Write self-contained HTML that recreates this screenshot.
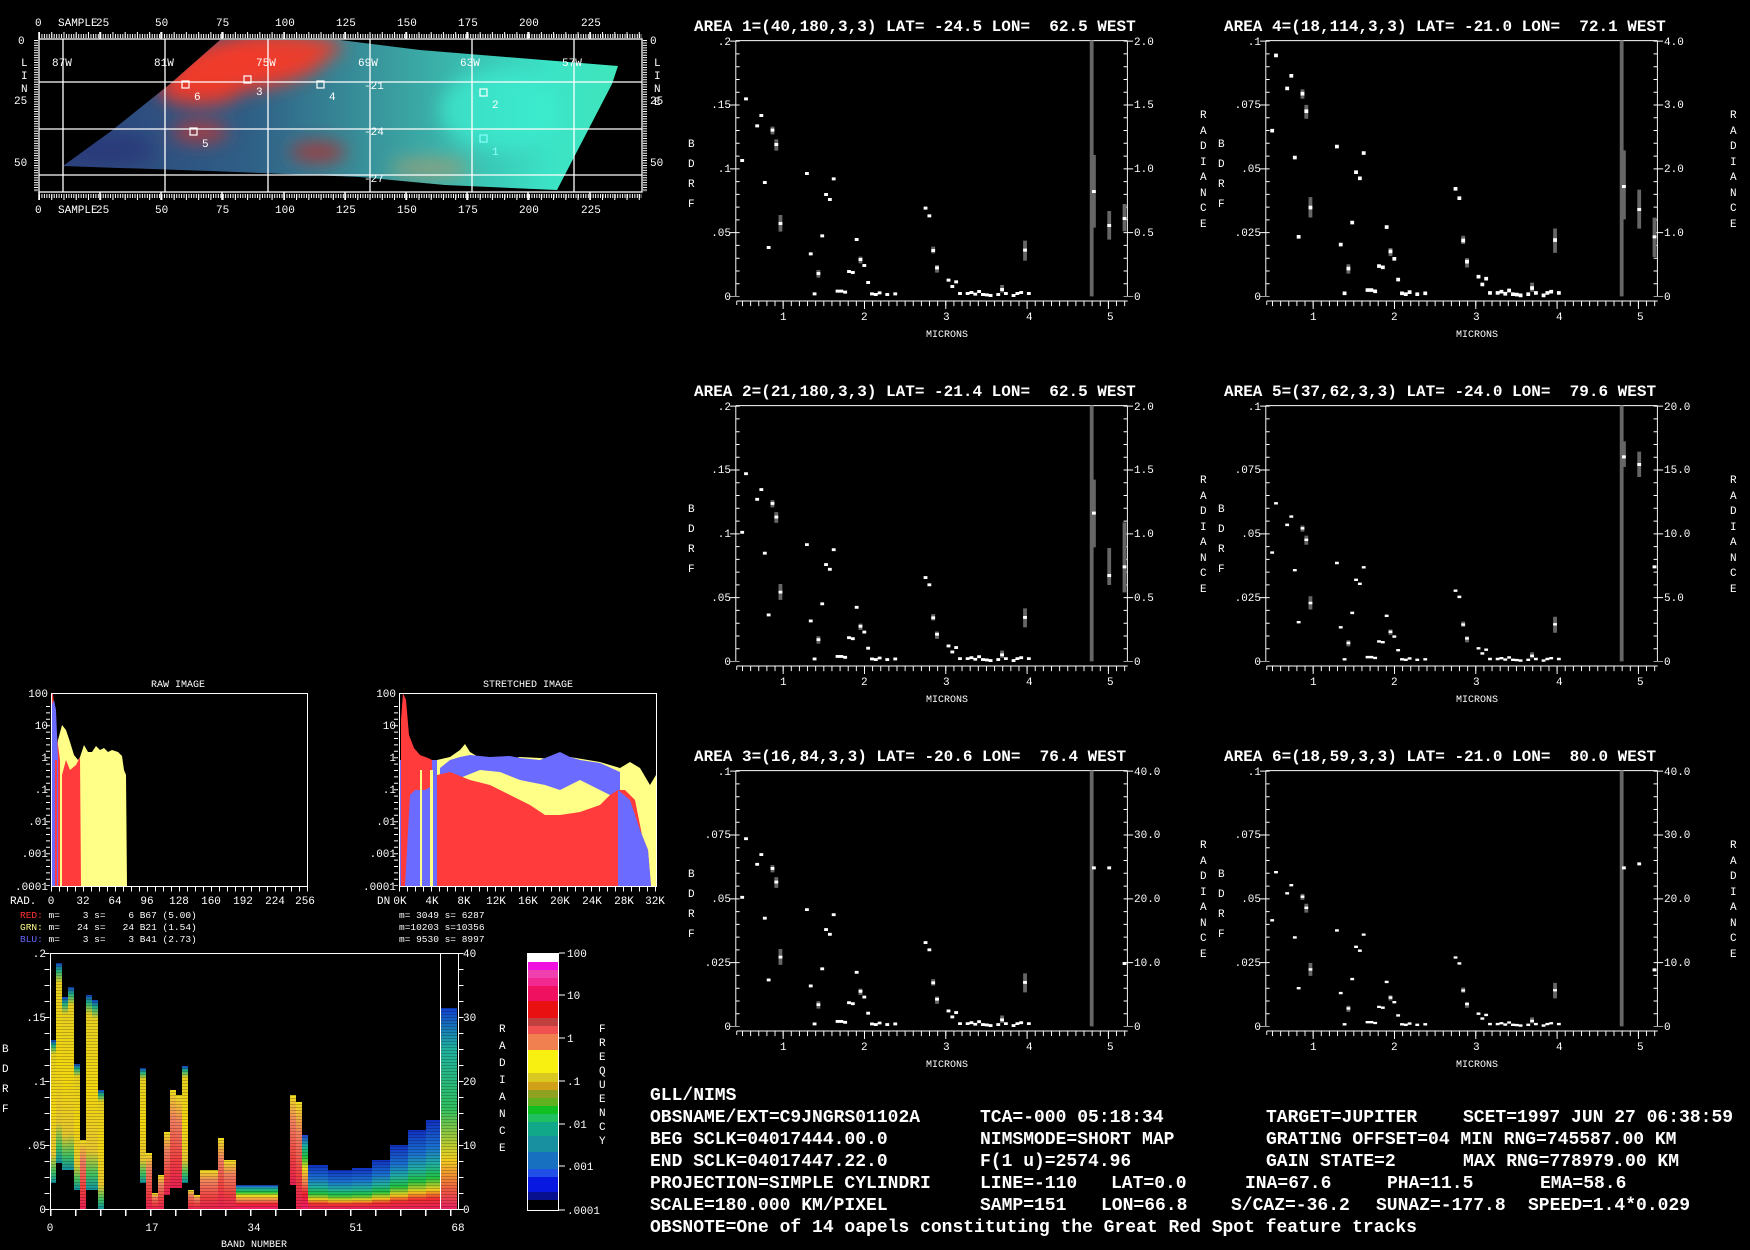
<!DOCTYPE html>
<html><head><meta charset="utf-8"><style>
html,body{margin:0;padding:0;background:#000;}
svg{display:block;}
text{font-family:"Liberation Mono",monospace;fill:#fff;white-space:pre;}
.s{font-size:11px;}
.t{font-size:16px;font-weight:bold;}
.b{font-size:18px;font-weight:bold;fill:#f2f2f2;}
</style></head><body>
<svg width="1750" height="1250" viewBox="0 0 1750 1250" xmlns="http://www.w3.org/2000/svg">
<rect width="1750" height="1250" fill="#000"/>
<defs>
 <filter id="bl" x="-20%" y="-20%" width="140%" height="140%"><feGaussianBlur stdDeviation="9"/></filter>
 <clipPath id="mapclip"><polygon points="220,40 340,40 420,50 618,66 612,84 557,190 445,185 360,177 210,171 63,166 110,132 170,84"/></clipPath>
 <linearGradient id="mg" x1="0" y1="0" x2="1" y2="0">
  <stop offset="0" stop-color="#2c3f7a"/><stop offset="0.35" stop-color="#2f5f86"/><stop offset="0.6" stop-color="#3aa0a0"/><stop offset="0.85" stop-color="#3be3c6"/><stop offset="1" stop-color="#42e6b8"/>
 </linearGradient>
 <pattern id="stripe" width="6" height="3" patternUnits="userSpaceOnUse"><rect width="6" height="1" fill="#000" opacity="0.22"/></pattern>
 <g id="ax" fill="none" stroke="#fff">
  <path d="M175 122H1403M175 122V889M1403 122V889M178 903H1404" stroke-width="3"/>
  <path d="M181 122V890" stroke-width="12" stroke-dasharray="3 35.3"/>
  <path d="M166 122V890" stroke-width="18" stroke-dasharray="3 188.5"/>
  <path d="M1397 122V890" stroke-width="12" stroke-dasharray="3 35.3"/>
  <path d="M1412 122V890" stroke-width="18" stroke-dasharray="3 188.5"/>
  <path d="M194.5 911H1404" stroke-width="15" stroke-dasharray="3 22.5"/>
  <path d="M322 915H1404" stroke-width="24" stroke-dasharray="3 252"/>
  <path d="M178 915V903" stroke-width="3"/>
 </g>
 <path id="pts" fill="#fff" d="M189 477h12v9h-12zM201 292h12v9h-12zM236 373h12v9h-12zM249 342h12v9h-12zM260 543h12v9h-12zM272 738h12v9h-12zM284 386h12v9h-12zM296 429h12v9h-12zM309 666h12v9h-12zM392 516h12v9h-12zM404 757h12v9h-12zM416 877h12v9h-12zM428 816h12v9h-12zM440 703h12v9h-12zM452 579h12v9h-12zM464 594h12v9h-12zM476 532h12v9h-12zM488 869h12v9h-12zM500 869h12v9h-12zM512 872h12v9h-12zM524 810h12v9h-12zM536 813h12v9h-12zM548 714h12v9h-12zM560 774h12v9h-12zM572 792h12v9h-12zM584 843h12v9h-12zM596 877h12v9h-12zM608 879h12v9h-12zM620 874h12v9h-12zM644 879h12v9h-12zM669 877h12v9h-12zM764 620h12v9h-12zM776 643h12v9h-12zM788 747h12v9h-12zM800 799h12v9h-12zM836 836h12v9h-12zM848 855h12v9h-12zM860 841h12v9h-12zM872 876h12v9h-12zM896 876h12v9h-12zM908 873h12v9h-12zM920 878h12v9h-12zM932 870h12v9h-12zM944 879h12v9h-12zM956 880h12v9h-12zM968 882h12v9h-12zM992 879h12v9h-12zM1004 864h12v9h-12zM1016 876h12v9h-12zM1040 882h12v9h-12zM1052 876h12v9h-12zM1064 873h12v9h-12zM1076 746h12v9h-12zM1088 876h12v9h-12z"/>
 <path id="err" fill="#666" d="M284 380h12v23h-12zM296 418h12v34h-12zM309 645h12v50h-12zM428 810h12v23h-12zM560 770h12v20h-12zM788 740h12v20h-12zM800 795h12v23h-12zM1076 722h12v60h-12zM1004 855h12v23h-12z"/>
 <path id="full" fill="#666" d="M1285 122h12v767h-12z"/>
</defs>

<!-- MAP -->
<g>
 <g clip-path="url(#mapclip)">
  <rect x="40" y="30" width="600" height="170" fill="url(#mg)"/>
  <g filter="url(#bl)">
   <ellipse cx="250" cy="62" rx="80" ry="28" fill="#f03a2a" transform="rotate(-8 250 62)"/>
   <ellipse cx="200" cy="88" rx="42" ry="17" fill="#ec3a2c"/>
   <ellipse cx="300" cy="48" rx="42" ry="12" fill="#e8402f"/>
   <ellipse cx="200" cy="132" rx="28" ry="10" fill="#b03a3c"/>
   <ellipse cx="318" cy="152" rx="28" ry="10" fill="#a03a3c"/>
   <ellipse cx="110" cy="150" rx="45" ry="16" fill="#2b3a7a"/>
   <ellipse cx="430" cy="168" rx="40" ry="10" fill="#8aa080"/>
   <ellipse cx="500" cy="110" rx="60" ry="40" fill="#3af0d0" opacity="0.7"/>
  </g>
 </g>
 <g stroke="#fff" stroke-width="1.3" fill="none">
  <rect x="39" y="39" width="603" height="153"/>
  <path d="M63 39V192M165 39V192M268 39V192M370 39V192M472 39V192M574 39V192M39 82H642M39 129H642M39 175H642"/>
 </g>
 <g stroke="#fff" fill="none">
  <path d="M39 36H642" stroke-width="4" stroke-dasharray="1 1.45"/>
  <path d="M39 35H642" stroke-width="6" stroke-dasharray="1 11.24"/>
  <path d="M39 196H642" stroke-width="4" stroke-dasharray="1 1.45"/>
  <path d="M39 197H642" stroke-width="6" stroke-dasharray="1 11.24"/>
  <path d="M39 32V39M100 32V39M161 32V39M222 32V39M284 32V39M345 32V39M406 32V39M467 32V39M528 32V39M590 32V39M39 192V200M100 192V200M161 192V200M222 192V200M284 192V200M345 192V200M406 192V200M467 192V200M528 192V200M590 192V200" stroke-width="1.5"/>
  <path d="M36 40V192" stroke-width="4" stroke-dasharray="1 1.45"/>
  <path d="M645 40V192" stroke-width="4" stroke-dasharray="1 1.45"/>
 </g>
 <g class="s">
  <text x="35" y="26">0</text><text x="58" y="26">SAMPLE</text><text x="96" y="26">25</text><text x="155" y="26">50</text><text x="216" y="26">75</text><text x="275" y="26">100</text><text x="336" y="26">125</text><text x="397" y="26">150</text><text x="458" y="26">175</text><text x="519" y="26">200</text><text x="581" y="26">225</text>
  <text x="35" y="213">0</text><text x="58" y="213">SAMPLE</text><text x="96" y="213">25</text><text x="155" y="213">50</text><text x="216" y="213">75</text><text x="275" y="213">100</text><text x="336" y="213">125</text><text x="397" y="213">150</text><text x="458" y="213">175</text><text x="519" y="213">200</text><text x="581" y="213">225</text>
  <text x="18" y="44">0</text><text x="21" y="66">L</text><text x="21" y="79">I</text><text x="21" y="92">N</text><text x="14" y="104">25</text><text x="14" y="166">50</text>
  <text x="650" y="44">0</text><text x="654" y="66">L</text><text x="654" y="79">I</text><text x="654" y="92">N</text><text x="654" y="105">E</text><text x="650" y="104">25</text><text x="650" y="166">50</text>
  <text x="52" y="66">87W</text><text x="154" y="66">81W</text><text x="256" y="66">75W</text><text x="358" y="66">69W</text><text x="460" y="66">63W</text><text x="562" y="66">57W</text>
  <text x="364" y="89">-21</text><text x="364" y="135">-24</text><text x="364" y="182">-27</text>
 </g>
 <g fill="none" stroke="#fff" stroke-width="1.2">
  <rect x="182" y="81" width="7" height="7"/><rect x="244" y="76" width="7" height="7"/><rect x="317" y="81" width="7" height="7"/><rect x="480" y="89" width="7" height="7"/><rect x="190" y="128" width="7" height="7"/><rect x="480" y="135" width="7" height="7" stroke="#8ff"/>
 </g>
 <g class="s">
  <text x="194" y="100">6</text><text x="256" y="95">3</text><text x="329" y="100">4</text><text x="492" y="108">2</text><text x="202" y="147">5</text><text x="492" y="155" style="fill:#8ff">1</text>
 </g>
</g>

<!-- SPECTRA -->
<g>
 <text class="t" x="694" y="31">AREA 1=(40,180,3,3) LAT= -24.5 LON=  62.5 WEST</text>
 <g transform="translate(680,0) scale(0.31888,0.33333)">
  <use href="#ax"/><use href="#full"/><use href="#err"/><use href="#pts"/>
  <path fill="#666" d="M1292 465h12v218h-12zM1340 633h12v86h-12zM1388 612h12v82h-12z"/>
  <path fill="#fff" d="M1292 570h12v9h-12zM1340 672h12v9h-12zM1388 651h12v9h-12z"/>
 </g>
 <g class="s" text-anchor="end"><text x="731" y="45">.2</text><text x="731" y="108">.15</text><text x="731" y="172">.1</text><text x="731" y="236">.05</text><text x="731" y="300">0</text></g>
 <g class="s"><text x="1134" y="45">2.0</text><text x="1134" y="108">1.5</text><text x="1134" y="172">1.0</text><text x="1134" y="236">0.5</text><text x="1134" y="300">0</text></g>
</g>
<g transform="translate(0,365)">
 <text class="t" x="694" y="31">AREA 2=(21,180,3,3) LAT= -21.4 LON=  62.5 WEST</text>
 <g transform="translate(680,0) scale(0.31888,0.33333)">
  <use href="#ax"/><use href="#full"/>
  <g transform="translate(0,888) scale(1,0.95) translate(0,-888)"><use href="#err"/><use href="#pts"/></g>
  <path fill="#666" d="M1292 344h12v203h-12zM1340 549h12v111h-12zM1388 472h12v210h-12z"/>
  <path fill="#fff" d="M1292 440h12v9h-12zM1340 627h12v9h-12zM1388 601h12v9h-12z"/>
 </g>
 <g class="s" text-anchor="end"><text x="731" y="45">.2</text><text x="731" y="108">.15</text><text x="731" y="172">.1</text><text x="731" y="236">.05</text><text x="731" y="300">0</text></g>
 <g class="s"><text x="1134" y="45">2.0</text><text x="1134" y="108">1.5</text><text x="1134" y="172">1.0</text><text x="1134" y="236">0.5</text><text x="1134" y="300">0</text></g>
</g>
<g transform="translate(0,730)">
 <text class="t" x="694" y="31">AREA 3=(16,84,3,3) LAT= -20.6 LON=  76.4 WEST</text>
 <g transform="translate(680,0) scale(0.31888,0.33333)">
  <use href="#ax"/><use href="#full"/>
  <g transform="translate(0,888) scale(1,0.95) translate(0,-888)"><use href="#err"/><use href="#pts"/></g>
  <path fill="#fff" d="M1292 409h12v9h-12zM1340 409h12v9h-12zM1388 696h12v9h-12z"/>
 </g>
 <g class="s" text-anchor="end"><text x="731" y="45">.1</text><text x="731" y="108">.075</text><text x="731" y="172">.05</text><text x="731" y="236">.025</text><text x="731" y="300">0</text></g>
 <g class="s"><text x="1134" y="45">40.0</text><text x="1134" y="108">30.0</text><text x="1134" y="172">20.0</text><text x="1134" y="236">10.0</text><text x="1134" y="300">0</text></g>
</g>
<g transform="translate(530,0)">
 <text class="t" x="694" y="31">AREA 4=(18,114,3,3) LAT= -21.0 LON=  72.1 WEST</text>
 <g transform="translate(680,0) scale(0.31888,0.33333)">
  <use href="#ax"/><use href="#full"/>
  <g transform="translate(0,888) scale(1,1.22) translate(0,-888)"><use href="#err"/><use href="#pts"/></g>
  <path fill="#666" d="M1292 451h12v207h-12zM1340 569h12v117h-12zM1388 653h12v118h-12z"/>
  <path fill="#fff" d="M1292 555h12v9h-12zM1340 624h12v9h-12zM1388 706h12v9h-12z"/>
 </g>
 <g class="s" text-anchor="end"><text x="731" y="45">.1</text><text x="731" y="108">.075</text><text x="731" y="172">.05</text><text x="731" y="236">.025</text><text x="731" y="300">0</text></g>
 <g class="s"><text x="1134" y="45">4.0</text><text x="1134" y="108">3.0</text><text x="1134" y="172">2.0</text><text x="1134" y="236">1.0</text><text x="1134" y="300">0</text></g>
</g>
<g transform="translate(530,365)">
 <text class="t" x="694" y="31">AREA 5=(37,62,3,3) LAT= -24.0 LON=  79.6 WEST</text>
 <g transform="translate(680,0) scale(0.31888,0.33333)">
  <use href="#ax"/><use href="#full"/>
  <g transform="translate(0,888) scale(1,0.8) translate(0,-888)"><use href="#err"/><use href="#pts"/></g>
  <path fill="#666" d="M1292 229h12v77h-12zM1340 260h12v76h-12z"/>
  <path fill="#fff" d="M1292 271h12v9h-12zM1340 294h12v9h-12zM1388 601h12v9h-12z"/>
 </g>
 <g class="s" text-anchor="end"><text x="731" y="45">.1</text><text x="731" y="108">.075</text><text x="731" y="172">.05</text><text x="731" y="236">.025</text><text x="731" y="300">0</text></g>
 <g class="s"><text x="1134" y="45">20.0</text><text x="1134" y="108">15.0</text><text x="1134" y="172">10.0</text><text x="1134" y="236">5.0</text><text x="1134" y="300">0</text></g>
</g>
<g transform="translate(530,730)">
 <text class="t" x="694" y="31">AREA 6=(18,59,3,3) LAT= -21.0 LON=  80.0 WEST</text>
 <g transform="translate(680,0) scale(0.31888,0.33333)">
  <use href="#ax"/><use href="#full"/>
  <g transform="translate(0,888) scale(1,0.78) translate(0,-888)"><use href="#err"/><use href="#pts"/></g>
  <path fill="#fff" d="M1292 409h12v9h-12zM1340 397h12v9h-12zM1388 715h12v9h-12z"/>
 </g>
 <g class="s" text-anchor="end"><text x="731" y="45">.1</text><text x="731" y="108">.075</text><text x="731" y="172">.05</text><text x="731" y="236">.025</text><text x="731" y="300">0</text></g>
 <g class="s"><text x="1134" y="45">40.0</text><text x="1134" y="108">30.0</text><text x="1134" y="172">20.0</text><text x="1134" y="236">10.0</text><text x="1134" y="300">0</text></g>
</g>
<g class="s">
 <g><text x="688" y="147">B</text><text x="688" y="167">D</text><text x="688" y="187">R</text><text x="688" y="207">F</text><text x="1200" y="118">R</text><text x="1200" y="134">A</text><text x="1200" y="149">D</text><text x="1200" y="165">I</text><text x="1200" y="180">A</text><text x="1200" y="196">N</text><text x="1200" y="211">C</text><text x="1200" y="227">E</text><text x="780" y="320">1</text><text x="861" y="320">2</text><text x="943" y="320">3</text><text x="1026" y="320">4</text><text x="1107" y="320">5</text><text x="926" y="337" style="font-size:10px">MICRONS</text></g>
 <g transform="translate(0,365)"><text x="688" y="147">B</text><text x="688" y="167">D</text><text x="688" y="187">R</text><text x="688" y="207">F</text><text x="1200" y="118">R</text><text x="1200" y="134">A</text><text x="1200" y="149">D</text><text x="1200" y="165">I</text><text x="1200" y="180">A</text><text x="1200" y="196">N</text><text x="1200" y="211">C</text><text x="1200" y="227">E</text><text x="780" y="320">1</text><text x="861" y="320">2</text><text x="943" y="320">3</text><text x="1026" y="320">4</text><text x="1107" y="320">5</text><text x="926" y="337" style="font-size:10px">MICRONS</text></g>
 <g transform="translate(0,730)"><text x="688" y="147">B</text><text x="688" y="167">D</text><text x="688" y="187">R</text><text x="688" y="207">F</text><text x="1200" y="118">R</text><text x="1200" y="134">A</text><text x="1200" y="149">D</text><text x="1200" y="165">I</text><text x="1200" y="180">A</text><text x="1200" y="196">N</text><text x="1200" y="211">C</text><text x="1200" y="227">E</text><text x="780" y="320">1</text><text x="861" y="320">2</text><text x="943" y="320">3</text><text x="1026" y="320">4</text><text x="1107" y="320">5</text><text x="926" y="337" style="font-size:10px">MICRONS</text></g>
 <g transform="translate(530,0)"><text x="688" y="147">B</text><text x="688" y="167">D</text><text x="688" y="187">R</text><text x="688" y="207">F</text><text x="1200" y="118">R</text><text x="1200" y="134">A</text><text x="1200" y="149">D</text><text x="1200" y="165">I</text><text x="1200" y="180">A</text><text x="1200" y="196">N</text><text x="1200" y="211">C</text><text x="1200" y="227">E</text><text x="780" y="320">1</text><text x="861" y="320">2</text><text x="943" y="320">3</text><text x="1026" y="320">4</text><text x="1107" y="320">5</text><text x="926" y="337" style="font-size:10px">MICRONS</text></g>
 <g transform="translate(530,365)"><text x="688" y="147">B</text><text x="688" y="167">D</text><text x="688" y="187">R</text><text x="688" y="207">F</text><text x="1200" y="118">R</text><text x="1200" y="134">A</text><text x="1200" y="149">D</text><text x="1200" y="165">I</text><text x="1200" y="180">A</text><text x="1200" y="196">N</text><text x="1200" y="211">C</text><text x="1200" y="227">E</text><text x="780" y="320">1</text><text x="861" y="320">2</text><text x="943" y="320">3</text><text x="1026" y="320">4</text><text x="1107" y="320">5</text><text x="926" y="337" style="font-size:10px">MICRONS</text></g>
 <g transform="translate(530,730)"><text x="688" y="147">B</text><text x="688" y="167">D</text><text x="688" y="187">R</text><text x="688" y="207">F</text><text x="1200" y="118">R</text><text x="1200" y="134">A</text><text x="1200" y="149">D</text><text x="1200" y="165">I</text><text x="1200" y="180">A</text><text x="1200" y="196">N</text><text x="1200" y="211">C</text><text x="1200" y="227">E</text><text x="780" y="320">1</text><text x="861" y="320">2</text><text x="943" y="320">3</text><text x="1026" y="320">4</text><text x="1107" y="320">5</text><text x="926" y="337" style="font-size:10px">MICRONS</text></g>
</g>

<!-- HISTOGRAMS -->
<g class="s">
 <text x="178" y="687" text-anchor="middle" style="font-size:10px">RAW IMAGE</text>
 <text x="528" y="687" text-anchor="middle" style="font-size:10px">STRETCHED IMAGE</text>
 <g text-anchor="end"><text x="48" y="697">100</text><text x="48" y="729">10</text><text x="48" y="761">1</text><text x="48" y="793">.1</text><text x="48" y="825">.01</text><text x="48" y="857">.001</text><text x="48" y="890">.0001</text>
 <text x="396" y="697">100</text><text x="396" y="729">10</text><text x="396" y="761">1</text><text x="396" y="793">.1</text><text x="396" y="825">.01</text><text x="396" y="857">.001</text><text x="396" y="890">.0001</text></g>
 <text x="10" y="904">RAD.</text>
 <g text-anchor="middle"><text x="51" y="904">0</text><text x="83" y="904">32</text><text x="115" y="904">64</text><text x="147" y="904">96</text><text x="179" y="904">128</text><text x="211" y="904">160</text><text x="243" y="904">192</text><text x="275" y="904">224</text><text x="305" y="904">256</text>
 <text x="400" y="904">0K</text><text x="432" y="904">4K</text><text x="464" y="904">8K</text><text x="496" y="904">12K</text><text x="528" y="904">16K</text><text x="560" y="904">20K</text><text x="592" y="904">24K</text><text x="624" y="904">28K</text><text x="655" y="904">32K</text></g>
 <text x="377" y="904">DN</text>
 <g style="font-size:9.5px">
  <text x="20" y="918"><tspan style="fill:#f33">RED:</tspan> m=    3 s=    6 B67 (5.00)</text>
  <text x="20" y="930"><tspan style="fill:#ff8">GRN:</tspan> m=   24 s=   24 B21 (1.54)</text>
  <text x="20" y="942"><tspan style="fill:#66f">BLU:</tspan> m=    3 s=    3 B41 (2.73)</text>
  <text x="399" y="918">m= 3049 s= 6287</text>
  <text x="399" y="930">m=10203 s=10356</text>
  <text x="399" y="942">m= 9530 s= 8997</text>
 </g>
</g>
<g>
 <polygon fill="#ffff88" points="51,886 51,770 55,770 58,740 62,725 66,730 70,742 74,755 78,760 80,757 84,745 88,752 92,752 96,746 100,750 104,748 108,752 112,750 118,752 122,756 124,770 126,775 127,886"/>
 <polygon fill="#ff3b3b" points="51,886 51,693 53,693 55,720 58,745 60,760 60,886"/>
 <polygon fill="#ff3b3b" points="62,886 62,775 66,760 70,770 76,765 80,757 81,886"/>
 <polygon fill="#6b6bff" points="51,886 51,750 52,705 54,700 56,710 57,735 58,760 58,886"/>
 <rect x="55" y="760" width="2" height="126" fill="#ff3b3b"/>
</g>
<g>
 <rect x="399" y="760" width="38" height="126" fill="#6b6bff"/>
 <polygon fill="#ffff88" points="437,886 437,760 450,757 460,750 465,744 470,752 480,758 500,760 520,757 540,758 560,760 570,757 600,762 610,765 620,768 630,762 640,768 650,785 656,775 656,886"/>
 <polygon fill="#6b6bff" points="440,768 450,760 460,757 470,755 490,757 510,756 520,758 540,760 560,752 570,757 580,760 600,763 620,772 620,800 600,790 580,780 560,790 545,785 520,780 500,772 480,770 460,778 440,780"/>
 <polygon fill="#ffff88" points="470,790 480,778 500,780 520,790 545,793 560,800 580,790 600,795 620,803 620,815 470,815"/>
 <polygon fill="#ff3b3b" points="437,886 437,775 450,772 470,780 490,785 510,795 530,805 545,815 560,815 580,812 600,805 610,795 618,790 625,790 635,800 642,835 648,850 651,886"/>
 <polygon fill="#6b6bff" points="618,886 618,790 630,800 640,830 648,850 651,886"/>
 <polygon fill="#ff3b3b" points="401,886 401,720 403,693 406,700 409,735 414,748 420,755 428,758 432,760 432,786 425,790 415,790 410,795 405,886"/>
 <rect x="420" y="770" width="2" height="116" fill="#ffff88"/><rect x="430" y="770" width="3" height="116" fill="#ffff88"/>
</g>
<g fill="none" stroke="#fff" stroke-width="1">
 <rect x="51.5" y="693.5" width="256" height="193"/>
 <rect x="399.5" y="693.5" width="257" height="193"/>
 <path d="M48 706V886M396 706V886" stroke-width="4" stroke-dasharray="1 5.4"/>
 <path d="M51 889H308M399 889H657" stroke-width="5" stroke-dasharray="1 7"/>
</g>

<!-- 2D HISTOGRAM -->
<defs>
 <linearGradient id="gy" x1="0" y1="0" x2="0" y2="1"><stop offset="0" stop-color="#1040c0"/><stop offset="0.04" stop-color="#20b080"/><stop offset="0.1" stop-color="#e8d020"/><stop offset="0.5" stop-color="#f4d810"/><stop offset="0.8" stop-color="#e8c830"/><stop offset="0.92" stop-color="#40c060"/><stop offset="1" stop-color="#1090a0"/></linearGradient>
 <linearGradient id="gr" x1="0" y1="0" x2="0" y2="1"><stop offset="0" stop-color="#f0e020"/><stop offset="0.3" stop-color="#f08060"/><stop offset="0.7" stop-color="#f04040"/><stop offset="1" stop-color="#e82050"/></linearGradient>
 <linearGradient id="gs" x1="0" y1="0" x2="0" y2="1"><stop offset="0" stop-color="#2040d0"/><stop offset="0.15" stop-color="#1cb0a0"/><stop offset="0.3" stop-color="#20c040"/><stop offset="0.45" stop-color="#f0e020"/><stop offset="0.65" stop-color="#f08050"/><stop offset="0.8" stop-color="#f02030"/><stop offset="1" stop-color="#f02070"/></linearGradient>
 <linearGradient id="gb" x1="0" y1="0" x2="0" y2="1"><stop offset="0" stop-color="#1030c0"/><stop offset="0.3" stop-color="#1a70d0"/><stop offset="0.5" stop-color="#20b0a0"/><stop offset="0.65" stop-color="#20c040"/><stop offset="0.78" stop-color="#f0d020"/><stop offset="0.88" stop-color="#f03030"/><stop offset="1" stop-color="#e8205a"/></linearGradient>
 <linearGradient id="gt" x1="0" y1="0" x2="0" y2="1"><stop offset="0" stop-color="#1040d0"/><stop offset="0.2" stop-color="#20b0a0"/><stop offset="0.5" stop-color="#30c060"/><stop offset="0.75" stop-color="#f0d020"/><stop offset="0.9" stop-color="#f06040"/><stop offset="1" stop-color="#e82060"/></linearGradient>
</defs>
<g>
 <rect x="50" y="1040" width="6" height="143" fill="url(#gy)"/>
 <rect x="56" y="963" width="6" height="200" fill="url(#gy)"/>
 <rect x="62" y="997" width="6" height="173" fill="url(#gy)"/>
 <rect x="68" y="987" width="6" height="183" fill="url(#gy)"/>
 <rect x="74" y="1064" width="6" height="126" fill="url(#gy)"/>
 <rect x="80" y="1140" width="6" height="69" fill="url(#gr)"/>
 <rect x="86" y="995" width="6" height="195" fill="url(#gy)"/>
 <rect x="92" y="1000" width="6" height="190" fill="url(#gy)"/>
 <rect x="98" y="1090" width="6" height="119" fill="url(#gy)"/>
 <rect x="140" y="1068" width="6" height="115" fill="url(#gy)"/>
 <rect x="146" y="1153" width="6" height="56" fill="url(#gr)"/>
 <rect x="152" y="1193" width="6" height="16" fill="url(#gr)"/>
 <rect x="158" y="1175" width="6" height="34" fill="url(#gr)"/>
 <rect x="164" y="1132" width="6" height="63" fill="url(#gr)"/>
 <rect x="170" y="1090" width="6" height="98" fill="url(#gr)"/>
 <rect x="176" y="1095" width="6" height="93" fill="url(#gr)"/>
 <rect x="182" y="1066" width="6" height="117" fill="url(#gy)"/>
 <rect x="188" y="1190" width="6" height="19" fill="url(#gr)"/>
 <rect x="194" y="1195" width="6" height="14" fill="url(#gr)"/>
 <rect x="200" y="1170" width="18" height="39" fill="url(#gr)"/>
 <rect x="218" y="1138" width="6" height="71" fill="url(#gr)"/>
 <rect x="224" y="1160" width="12" height="49" fill="url(#gr)"/>
 <rect x="236" y="1185" width="42" height="24" fill="url(#gs)"/>
 <rect x="290" y="1095" width="6" height="90" fill="url(#gr)"/>
 <rect x="296" y="1102" width="6" height="107" fill="url(#gr)"/>
 <rect x="302" y="1135" width="6" height="74" fill="url(#gs)"/>
 <rect x="308" y="1165" width="20" height="44" fill="url(#gb)"/>
 <rect x="328" y="1170" width="24" height="39" fill="url(#gb)"/>
 <rect x="352" y="1168" width="20" height="41" fill="url(#gb)"/>
 <rect x="372" y="1160" width="18" height="49" fill="url(#gb)"/>
 <rect x="390" y="1145" width="18" height="64" fill="url(#gb)"/>
 <rect x="408" y="1130" width="18" height="79" fill="url(#gb)"/>
 <rect x="426" y="1120" width="14" height="89" fill="url(#gb)"/>
 <rect x="441" y="1008" width="16" height="201" fill="url(#gt)"/>
 <rect x="50" y="953" width="408" height="256" fill="url(#stripe)"/>
</g>
<g fill="none" stroke="#fff" stroke-width="1">
 <path d="M50.5 953V1209M458.5 953V1209M50 953.5H459M440.5 953V1209M50 1209.5H459"/>
 <path d="M47 953V1210M461 953V1210" stroke-width="5" stroke-dasharray="1 15"/>
 <path d="M50 1213H459" stroke-width="6" stroke-dasharray="1.5 23.5"/>
 <rect x="527.5" y="953.5" width="31" height="257"/>
</g>
<g>
 <rect x="528" y="954" width="30" height="8" fill="#fff"/>
 <rect x="528" y="962" width="30" height="8" fill="#f010e0"/>
 <rect x="528" y="970" width="30" height="8" fill="#f040b0"/>
 <rect x="528" y="978" width="30" height="8" fill="#f02890"/>
 <rect x="528" y="986" width="30" height="15" fill="#f01060"/>
 <rect x="528" y="1001" width="30" height="17" fill="#e81010"/>
 <rect x="528" y="1018" width="30" height="8" fill="#c04040"/>
 <rect x="528" y="1026" width="30" height="8" fill="#f05050"/>
 <rect x="528" y="1034" width="30" height="16" fill="#f08050"/>
 <rect x="528" y="1050" width="30" height="23" fill="#f8f010"/>
 <rect x="528" y="1073" width="30" height="9" fill="#d8c820"/>
 <rect x="528" y="1082" width="30" height="8" fill="#d0a018"/>
 <rect x="528" y="1090" width="30" height="8" fill="#90a020"/>
 <rect x="528" y="1098" width="30" height="8" fill="#60b020"/>
 <rect x="528" y="1106" width="30" height="8" fill="#10c020"/>
 <rect x="528" y="1114" width="30" height="8" fill="#20c060"/>
 <rect x="528" y="1122" width="30" height="14" fill="#10a888"/>
 <rect x="528" y="1136" width="30" height="16" fill="#1890a0"/>
 <rect x="528" y="1152" width="30" height="17" fill="#1870c0"/>
 <rect x="528" y="1169" width="30" height="8" fill="#2050e8"/>
 <rect x="528" y="1177" width="30" height="15" fill="#0818e0"/>
 <rect x="528" y="1192" width="30" height="8" fill="#081090"/>
 <rect x="528" y="1200" width="30" height="10" fill="#000"/>
 <path d="M559 953h6M559 995h6M559 1038h6M559 1081h6M559 1124h6M559 1166h6M559 1210h6" stroke="#fff"/>
</g>
<g class="s">
 <g text-anchor="end"><text x="46" y="957">.2</text><text x="46" y="1021">.15</text><text x="46" y="1085">.1</text><text x="46" y="1149">.05</text><text x="46" y="1213">0</text></g>
 <text x="463" y="957">40</text><text x="463" y="1021">30</text><text x="463" y="1085">20</text><text x="463" y="1149">10</text><text x="463" y="1213">0</text>
 <g text-anchor="middle"><text x="50" y="1231">0</text><text x="152" y="1231">17</text><text x="254" y="1231">34</text><text x="356" y="1231">51</text><text x="458" y="1231">68</text></g>
 <text x="254" y="1247" text-anchor="middle" style="font-size:10px">BAND NUMBER</text>
 <text x="2" y="1052">B</text><text x="2" y="1072">D</text><text x="2" y="1092">R</text><text x="2" y="1112">F</text>
 <text x="499" y="1032">R</text><text x="499" y="1049">A</text><text x="499" y="1066">D</text><text x="499" y="1083">I</text><text x="499" y="1100">A</text><text x="499" y="1117">N</text><text x="499" y="1134">C</text><text x="499" y="1151">E</text>
 <text x="599" y="1032">F</text><text x="599" y="1046">R</text><text x="599" y="1060">E</text><text x="599" y="1074">Q</text><text x="599" y="1088">U</text><text x="599" y="1102">E</text><text x="599" y="1116">N</text><text x="599" y="1130">C</text><text x="599" y="1144">Y</text>
 <text x="567" y="957">100</text><text x="567" y="999">10</text><text x="567" y="1042">1</text><text x="567" y="1085">.1</text><text x="567" y="1128">.01</text><text x="567" y="1170">.001</text><text x="567" y="1214">.0001</text>
</g>

<!-- INFO TEXT -->
<g class="b">
 <text x="650" y="1100">GLL/NIMS</text>
 <text x="650" y="1122">OBSNAME/EXT=C9JNGRS01102A</text><text x="980" y="1122">TCA=-000 05:18:34</text><text x="1266" y="1122">TARGET=JUPITER</text><text x="1463" y="1122">SCET=1997 JUN 27 06:38:59</text>
 <text x="650" y="1144">BEG SCLK=04017444.00.0</text><text x="980" y="1144">NIMSMODE=SHORT MAP</text><text x="1266" y="1144">GRATING OFFSET=04 MIN RNG=745587.00 KM</text>
 <text x="650" y="1166">END SCLK=04017447.22.0</text><text x="980" y="1166">F(1 u)=2574.96</text><text x="1266" y="1166">GAIN STATE=2</text><text x="1463" y="1166">MAX RNG=778979.00 KM</text>
 <text x="650" y="1188">PROJECTION=SIMPLE CYLINDRI</text><text x="980" y="1188">LINE=-110</text><text x="1111" y="1188">LAT=0.0</text><text x="1245" y="1188">INA=67.6</text><text x="1387" y="1188">PHA=11.5</text><text x="1540" y="1188">EMA=58.6</text>
 <text x="650" y="1210">SCALE=180.000 KM/PIXEL</text><text x="980" y="1210">SAMP=151</text><text x="1101" y="1210">LON=66.8</text><text x="1231" y="1210">S/CAZ=-36.2</text><text x="1376" y="1210">SUNAZ=-177.8</text><text x="1528" y="1210">SPEED=1.4*0.029</text>
 <text x="650" y="1232">OBSNOTE=One of 14 oapels constituting the Great Red Spot feature tracks</text>
</g>
</svg>
</body></html>
